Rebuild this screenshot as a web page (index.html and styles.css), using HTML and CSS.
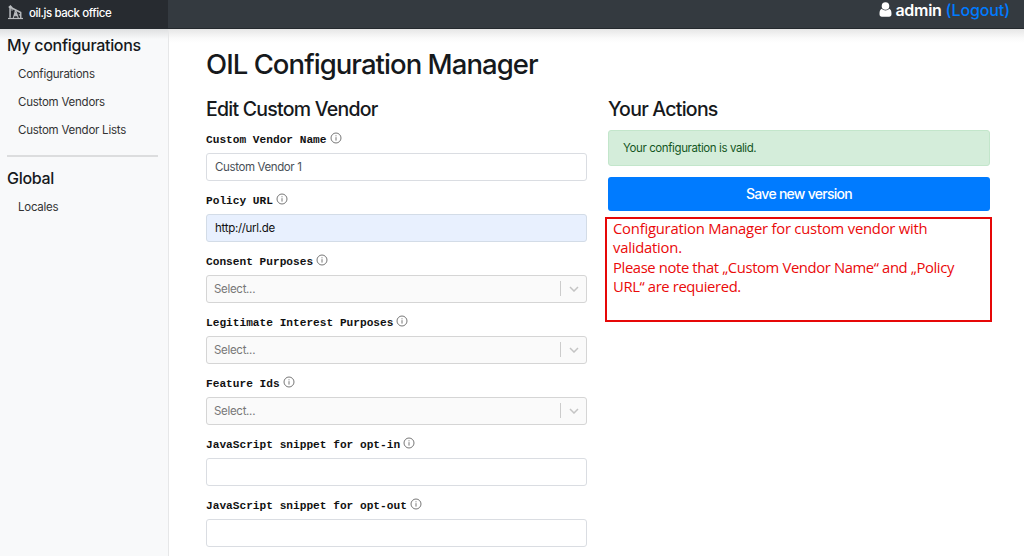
FILE: index.html
```html
<!DOCTYPE html>
<html lang="en">
<head>
<meta charset="utf-8">
<title>oil.js back office</title>
<link rel="stylesheet" href="styles.css">
</head>
<body>
<svg class="defs" width="0" height="0" aria-hidden="true">
  <symbol id="info" viewBox="0 0 12 12"><circle cx="6" cy="6" r="5" fill="none" stroke="#777" stroke-width="1"/><path d="M6 5.2v3.4M6 3.3v1" stroke="#777" stroke-width="1"/></symbol>
  <symbol id="chevron" viewBox="0 0 10 6"><path d="M1 1l4 4 4-4" fill="none" stroke="#c4c4c4" stroke-width="1.5"/></symbol>
</svg>
<header class="topbar">
  <a class="brand">
    <svg class="brand-icon" viewBox="0 0 16 15" fill="none" stroke="#b9bcbf"><path d="M2.200 1.200v12M.8 2.200L2.600.6l1.800 1.800M3 2.200l11 5.600" stroke-width="1.600"/><path d="M4.300 3v2.600M8 5L5.600 13.600M8.200 5l2.800 8.600M7 8h2.400M6.400 11h3.600M7 8l3 3M9.400 8l-3 3" stroke-width="1.100"/><path d="M13.600 7.500v6M11.500 10h2" stroke-width="1.500"/><path d="M0 13.900h16" stroke-width="1.300"/></svg>
    <span class="brand-text">oil.js back office</span>
  </a>
  <div class="account">
    <svg class="user-icon" viewBox="0 0 12 15" fill="#fff"><circle cx="6" cy="4" r="3.8"/><path d="M2.3 6.8C.6 7.3 0 9.4 0 12c0 1.8.9 2.8 2.4 2.8h7.2c1.5 0 2.4-1 2.4-2.8 0-2.6-.6-4.7-2.3-5.2C8.800 8 7.500 8.500 6 8.500S3.200 8 2.300 6.800z"/></svg>
    <span class="user-name">admin</span>
    <a class="logout">(Logout)</a>
  </div>
</header>
<div class="layout">
  <nav class="sidebar">
    <h5 class="side-title">My configurations</h5>
    <a class="side-link">Configurations</a>
    <a class="side-link">Custom Vendors</a>
    <a class="side-link">Custom Vendor Lists</a>
    <hr class="side-rule">
    <h5 class="side-title side-title-global">Global</h5>
    <a class="side-link">Locales</a>
  </nav>
  <main class="content">
    <h1 class="page-title">OIL Configuration Manager</h1>
    <div class="columns">
      <form class="form">
        <h4 class="section-title">Edit Custom Vendor</h4>
        <div class="field"><label class="label">Custom Vendor Name<svg class="info"><use href="#info"/></svg></label><div class="input"><span class="value-name">Custom Vendor 1</span></div></div>
        <div class="field"><label class="label">Policy URL<svg class="info"><use href="#info"/></svg></label><div class="input autofilled"><span class="value-url">http://url.de</span></div></div>
        <div class="field"><label class="label">Consent Purposes<svg class="info"><use href="#info"/></svg></label><div class="input select"><span class="placeholder">Select...</span><i class="divider"></i><svg class="chevron"><use href="#chevron"/></svg></div></div>
        <div class="field"><label class="label">Legitimate Interest Purposes<svg class="info"><use href="#info"/></svg></label><div class="input select"><span class="placeholder">Select...</span><i class="divider"></i><svg class="chevron"><use href="#chevron"/></svg></div></div>
        <div class="field"><label class="label">Feature Ids<svg class="info"><use href="#info"/></svg></label><div class="input select"><span class="placeholder">Select...</span><i class="divider"></i><svg class="chevron"><use href="#chevron"/></svg></div></div>
        <div class="field"><label class="label">JavaScript snippet for opt-in<svg class="info"><use href="#info"/></svg></label><div class="input"></div></div>
        <div class="field"><label class="label">JavaScript snippet for opt-out<svg class="info"><use href="#info"/></svg></label><div class="input"></div></div>
      </form>
      <section class="actions">
        <h4 class="section-title">Your Actions</h4>
        <div class="alert"><span class="alert-text">Your configuration is valid.</span></div>
        <div class="save"><span class="save-text">Save new version</span></div>
        <div class="note"><span class="note-intro">Configuration Manager for custom vendor with</span><br><span class="note-intro">validation.</span><br><span class="note-hint">Please note that „Custom Vendor Name“ and „Policy</span><br><span class="note-hint">URL“ are requiered.</span></div>
      </section>
    </div>
  </main>
</div>
</body>
</html>
```
FILE: styles.css
```css
* { box-sizing: border-box; }
body { margin: 0; height: 556px; overflow: hidden; background: #fff; color: #16191c; font-family: Inter, "Liberation Sans", sans-serif; font-size: 11.5px; }
h1, h4, h5 { margin: 0; font-weight: 500; white-space: nowrap; }
.defs { display: block; height: 0; }
.topbar { display: flex; justify-content: space-between; height: 29px; background: #343a40; border-bottom: 1px solid #24292e; }
.brand { display: flex; align-items: center; width: 168px; padding: 0 0 3px 8px; background: #272b30; color: #fff; }
.brand-icon { width: 15px; height: 15px; margin-right: 6px; }
.brand-text { font-size: 11.5px; font-weight: 500; letter-spacing: -.42px; }
.account { display: flex; align-items: center; padding: 0 14px 9px 0; font-size: 16px; font-weight: 600; letter-spacing: -.3px; color: #fff; }
.user-icon { width: 13px; height: 15px; margin-right: 3px; }
.user-name { margin-right: 4px; }
.logout { color: #007bff; font-weight: 500; letter-spacing: -.1px; }
.layout { display: flex; height: 527px; background: linear-gradient(#e6e6e6, #fafafa 9px, #fff 14px); }
.sidebar { display: flex; flex-direction: column; width: 169px; padding: 6px 10px 0 7px; background: linear-gradient(#dfe0e1, #f8f9fa 10px); border-right: 1px solid #e6e7e8; }
.side-title { font-size: 16px; line-height: 20px; letter-spacing: -.3px; }
.side-link { display: block; margin-left: 11px; height: 28px; line-height: 28px; letter-spacing: -.24px; color: #333; white-space: nowrap; }
.side-title + .side-link { margin-top: 5.4px; }
.side-rule { width: 151px; height: 2px; margin: 10.6px 0 11px; border: 0; background: #dcddde; }
.side-title-global + .side-link { margin-top: 5px; }
.content { flex: 1; padding: 18px 34px 0 37px; }
.page-title { font-size: 27.5px; line-height: 34px; letter-spacing: -.95px; }
.columns { display: grid; grid-template-columns: 381px 382px; gap: 21px; }
.section-title { font-size: 19.5px; line-height: 24px; padding-top: 1px; margin-top: 15px; letter-spacing: -.75px; }
.field { height: 61px; }
.form .section-title { margin-bottom: 8px; }
.label { display: flex; align-items: center; height: 24px; padding-bottom: 2px; font: bold 11.17px/20px "Liberation Mono", monospace; color: #111; white-space: pre; }
.info { width: 12px; height: 12px; margin: -5px 0 0 3px; }
.input { display: flex; align-items: center; height: 27.5px; padding: 0 8px; border: 1px solid #dadde2; border-radius: 3px; color: #495057; letter-spacing: -.38px; }
.autofilled { background: #e8f0fe; color: #111; border-color: #d3dce7; letter-spacing: -.3px; }
.select { padding: 0 7px; background: #fafafa; border-color: #d5d5d5; color: #777; letter-spacing: -.3px; }
.divider { width: 1px; height: 15px; margin-left: auto; background: #ccc; }
.chevron { width: 10px; height: 6px; margin: 0 0 0 8px; }
.actions .section-title { margin-bottom: 9px; }
.alert { display: flex; align-items: center; height: 36px; padding: 0 14px; border: 1px solid #c3e6cb; border-radius: 3px; background: #d4edda; color: #155724; letter-spacing: -.4px; }
.save { display: flex; align-items: center; justify-content: center; height: 33.5px; margin-top: 11px; border-radius: 3px; background: #007bff; color: #fff; font-size: 14px; font-weight: 500; letter-spacing: -.73px; }
.note { width: 387px; height: 105px; margin: 6.500px 0 0 -3px; padding: 0 6px; border: 2px solid #e60808; color: #ea0a0a; font: 14.8px/19.4px "Open Sans", "Noto Sans", sans-serif; white-space: nowrap; }
.note-intro { letter-spacing: -.22px; }
.note-hint { letter-spacing: -.37px; }
```
